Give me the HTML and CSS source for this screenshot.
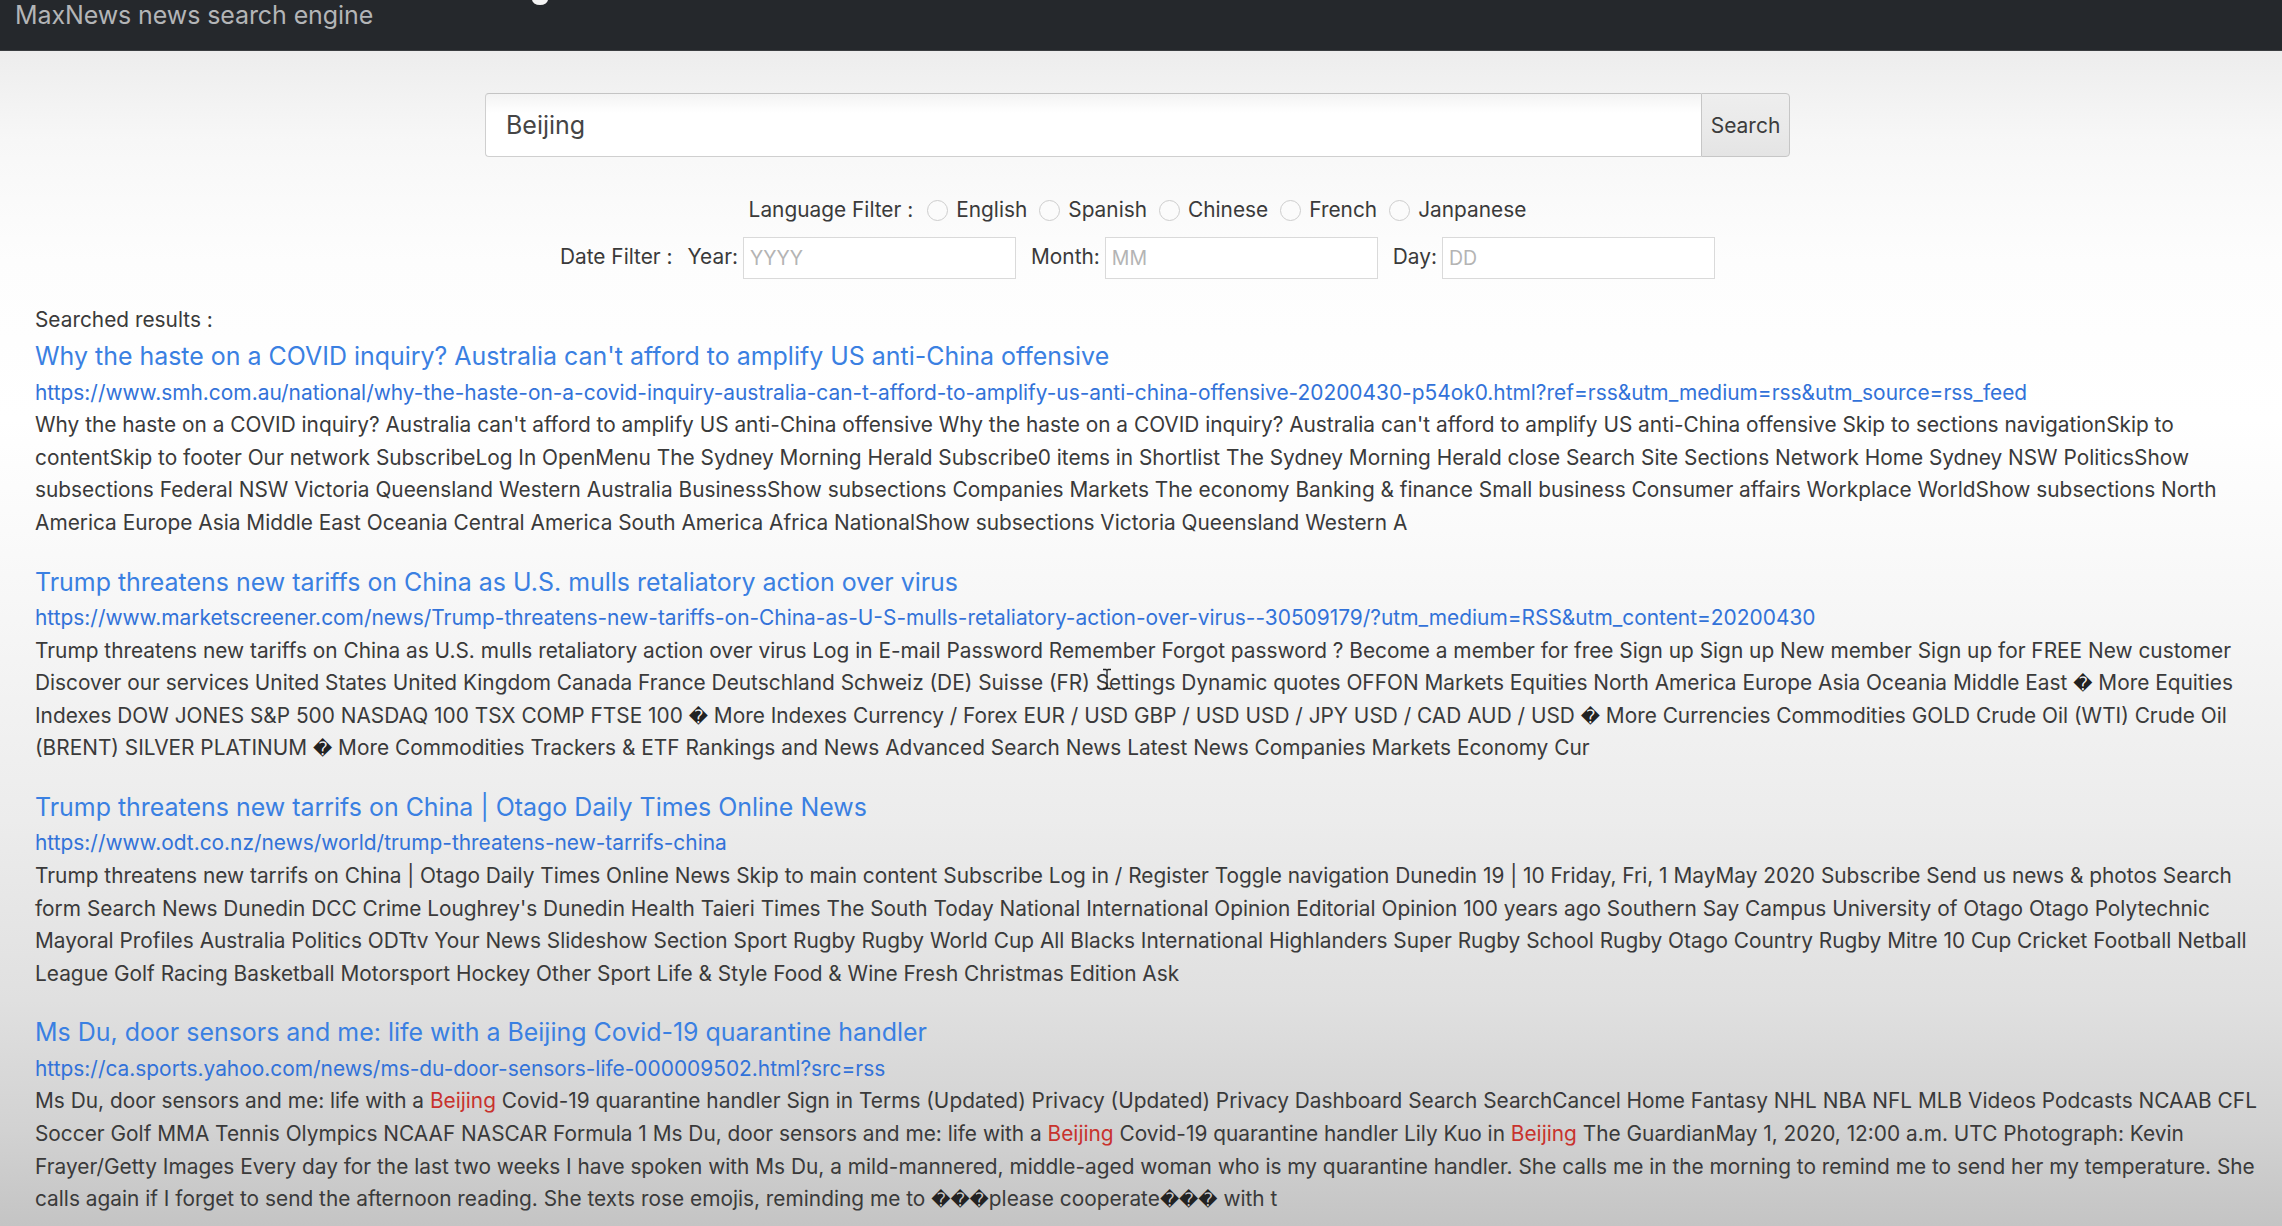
FILE: index.html
```html
<!DOCTYPE html>
<html lang="en">
<head>
<meta charset="utf-8">
<title>MaxNews news search engine</title>
<link rel="stylesheet" href="styles.css">
</head>
<body>
<nav class="navbar">
  <span class="brand">MaxNews news search engine</span>
  <span class="blip"></span>
</nav>
<main class="page">
  <section class="search-area">
    <form class="search-group">
      <input class="search-input" type="text" value="Beijing">
      <button class="search-btn" type="button">Search</button>
    </form>
    <div class="lang-row">
      <span class="filter-label">Language Filter :</span>
      <label class="opt"><input class="radio" type="radio" name="lang"><span>English</span></label>
      <label class="opt"><input class="radio" type="radio" name="lang"><span>Spanish</span></label>
      <label class="opt"><input class="radio" type="radio" name="lang"><span>Chinese</span></label>
      <label class="opt"><input class="radio" type="radio" name="lang"><span>French</span></label>
      <label class="opt"><input class="radio" type="radio" name="lang"><span>Janpanese</span></label>
    </div>
    <div class="date-row">
      <span class="date-title">Date Filter :</span>
      <label class="date-field"><span class="date-name">Year:</span><input class="date-input" type="text" placeholder="YYYY"></label>
      <label class="date-field"><span class="date-name">Month:</span><input class="date-input" type="text" placeholder="MM"></label>
      <label class="date-field"><span class="date-name">Day:</span><input class="date-input" type="text" placeholder="DD"></label>
    </div>
  </section>

  <section class="results">
    <div class="results-heading">Searched results :</div>

    <article class="result">
      <a class="result-title" href="#">Why the haste on a COVID inquiry? Australia can't afford to amplify US anti-China offensive</a>
      <a class="result-url" href="#">https://www.smh.com.au/national/why-the-haste-on-a-covid-inquiry-australia-can-t-afford-to-amplify-us-anti-china-offensive-20200430-p54ok0.html?ref=rss&amp;utm_medium=rss&amp;utm_source=rss_feed</a>
      <p class="result-snippet">Why the haste on a COVID inquiry? Australia can't afford to amplify US anti-China offensive Why the haste on a COVID inquiry? Australia can't afford to amplify US anti-China offensive Skip to sections navigationSkip to contentSkip to footer Our network SubscribeLog In OpenMenu The Sydney Morning Herald Subscribe0 items in Shortlist The Sydney Morning Herald close Search Site Sections Network Home Sydney NSW PoliticsShow subsections Federal NSW Victoria Queensland Western Australia BusinessShow subsections Companies Markets The economy Banking &amp; finance Small business Consumer affairs Workplace WorldShow subsections North America Europe Asia Middle East Oceania Central America South America Africa NationalShow subsections Victoria Queensland Western A</p>
    </article>

    <article class="result">
      <a class="result-title" href="#">Trump threatens new tariffs on China as U.S. mulls retaliatory action over virus</a>
      <a class="result-url" href="#">https://www.marketscreener.com/news/Trump-threatens-new-tariffs-on-China-as-U-S-mulls-retaliatory-action-over-virus--30509179/?utm_medium=RSS&amp;utm_content=20200430</a>
      <p class="result-snippet">Trump threatens new tariffs on China as U.S. mulls retaliatory action over virus Log in E-mail Password Remember Forgot password ? Become a member for free Sign up Sign up New member Sign up for FREE New customer Discover our services United States United Kingdom Canada France Deutschland Schweiz (DE) Suisse (FR) Settings Dynamic quotes OFFON Markets Equities North America Europe Asia Oceania Middle East <span class="bad">&#xFFFD;</span> More Equities Indexes DOW JONES S&amp;P 500 NASDAQ 100 TSX COMP FTSE 100 <span class="bad">&#xFFFD;</span> More Indexes Currency / Forex EUR / USD GBP / USD USD / JPY USD / CAD AUD / USD <span class="bad">&#xFFFD;</span> More Currencies Commodities GOLD Crude Oil (WTI) Crude Oil (BRENT) SILVER PLATINUM <span class="bad">&#xFFFD;</span> More Commodities Trackers &amp; ETF Rankings and News Advanced Search News Latest News Companies Markets Economy Cur</p>
    </article>

    <article class="result">
      <a class="result-title" href="#">Trump threatens new tarrifs on China | Otago Daily Times Online News</a>
      <a class="result-url" href="#">https://www.odt.co.nz/news/world/trump-threatens-new-tarrifs-china</a>
      <p class="result-snippet">Trump threatens new tarrifs on China | Otago Daily Times Online News Skip to main content Subscribe Log in / Register Toggle navigation Dunedin 19 | 10 Friday, Fri, 1 MayMay 2020 Subscribe Send us news &amp; photos Search form Search News Dunedin DCC Crime Loughrey's Dunedin Health Taieri Times The South Today National International Opinion Editorial Opinion 100 years ago Southern Say Campus University of Otago Otago Polytechnic Mayoral Profiles Australia Politics ODTtv Your News Slideshow Section Sport Rugby Rugby World Cup All Blacks International Highlanders Super Rugby School Rugby Otago Country Rugby Mitre 10 Cup Cricket Football Netball League Golf Racing Basketball Motorsport Hockey Other Sport Life &amp; Style Food &amp; Wine Fresh Christmas Edition Ask</p>
    </article>

    <article class="result">
      <a class="result-title" href="#">Ms Du, door sensors and me: life with a Beijing Covid-19 quarantine handler</a>
      <a class="result-url" href="#">https://ca.sports.yahoo.com/news/ms-du-door-sensors-life-000009502.html?src=rss</a>
      <p class="result-snippet">Ms Du, door sensors and me: life with a <mark class="hit">Beijing</mark> Covid-19 quarantine handler Sign in Terms (Updated) Privacy (Updated) Privacy Dashboard Search SearchCancel Home Fantasy NHL NBA NFL MLB Videos Podcasts NCAAB CFL Soccer Golf MMA Tennis Olympics NCAAF NASCAR Formula 1 Ms Du, door sensors and me: life with a <mark class="hit">Beijing</mark> Covid-19 quarantine handler Lily Kuo in <mark class="hit">Beijing</mark> The GuardianMay 1, 2020, 12:00 a.m. UTC Photograph: Kevin Frayer/Getty Images Every day for the last two weeks I have spoken with Ms Du, a mild-mannered, middle-aged woman who is my quarantine handler. She calls me in the morning to remind me to send her my temperature. She calls again if I forget to send the afternoon reading. She texts rose emojis, reminding me to <span class="bad">&#xFFFD;&#xFFFD;&#xFFFD;</span>please cooperate<span class="bad">&#xFFFD;&#xFFFD;&#xFFFD;</span> with t</p>
    </article>
  </section>
</main>
<svg class="ibeam" width="12" height="22" viewBox="0 0 12 22" aria-hidden="true">
  <path d="M2 1.5h3l1 1 1-1h3M6 2.5v17M2 20.5h3l1-1 1 1h3" fill="none" stroke="#222" stroke-width="1.3"/>
</svg>
</body>
</html>
```

FILE: styles.css
```css
html, body {
  margin: 0;
  padding: 0;
}

body {
  position: relative;
  min-height: 1226px;
  font-family: Inter, "Liberation Sans", Arial, sans-serif;
  font-size: 20.85px;
  line-height: 32.6px;
  color: #3a3a3a;
  background:
    linear-gradient(180deg,
      #e6e6e6 0px,
      #eeeeee 60px,
      #f7f7f7 140px,
      #fdfdfd 260px,
      #ffffff 420px,
      #f6f6f6 620px,
      #ececec 820px,
      #e0e0e0 1000px,
      #d2d2d2 1130px,
      #c4c4c4 1226px);
  overflow: hidden;
}

/* ---------- navbar ---------- */
.navbar {
  position: relative;
  height: 51px;
  background: #25282c;
  border-bottom: 1px solid #3a3d40;
  box-sizing: border-box;
  padding-left: 15px;
}

.brand {
  display: block;
  font-size: 25px;
  line-height: 30px;
  color: #b3b5b7;
  letter-spacing: -0.1px;
}

.blip {
  position: absolute;
  left: 532px;
  top: -6px;
  width: 16px;
  height: 11px;
  border-radius: 50%;
  background: #f4f4f4;
}

/* ---------- search area ---------- */
.search-area {
  padding-right: 7px;
  display: flex;
  flex-direction: column;
  align-items: center;
}

.search-group {
  margin: 42px 0 0;
  display: flex;
  width: 1305px;
  height: 64px;
}

.search-input {
  flex: 1;
  box-sizing: border-box;
  height: 64px;
  margin: 0;
  padding: 0 20px;
  border: 1px solid #cfcfcf;
  border-top-color: #c4c4c4;
  border-right: none;
  border-radius: 4px 0 0 4px;
  background: linear-gradient(180deg, #f3f3f3 0%, #ffffff 30%, #ffffff 100%);
  font-family: inherit;
  font-size: 25px;
  color: #454545;
  outline: none;
}

.search-btn {
  width: 89px;
  height: 64px;
  box-sizing: border-box;
  margin: 0;
  padding: 0;
  border: 1px solid #c6c6c6;
  border-radius: 0 4px 4px 0;
  background: linear-gradient(180deg, #eeeeee 0%, #e9e9e9 60%, #e4e4e4 100%);
  font-family: inherit;
  font-size: 21px;
  color: #3c3c3c;
}

.lang-row {
  margin-top: 37px;
  display: flex;
  align-items: center;
  height: 32.6px;
}

.filter-label {
  margin-right: 14px;
}

.opt {
  display: flex;
  align-items: center;
  margin-right: 12px;
}

.opt:last-child {
  margin-right: 0;
}

.radio {
  appearance: none;
  -webkit-appearance: none;
  width: 21px;
  height: 21px;
  margin: 0 8px 0 0;
  border: 1px solid #cdcdcd;
  border-radius: 50%;
  background: #fbfbfb;
  box-sizing: border-box;
}

.date-row {
  margin-top: 10px;
  display: flex;
  align-items: center;
  height: 42px;
}

.date-title {
  margin-right: 15px;
}

.date-field {
  display: flex;
  align-items: center;
  margin-right: 15px;
}

.date-field:last-child {
  margin-right: 0;
}

.date-name {
  margin-right: 5px;
}

.date-input {
  width: 273px;
  height: 42px;
  box-sizing: border-box;
  margin: 0;
  padding: 0 6px;
  border: 1px solid #dadada;
  border-radius: 0;
  background: #ffffff;
  font-family: inherit;
  font-size: 19.5px;
  color: #444;
  outline: none;
}

.date-input::placeholder {
  color: #b4b4b4;
}

/* ---------- results ---------- */
.results {
  margin-top: 25px;
  padding: 0 17px 0 35px;
}

.results-heading {
  color: #3a3a3a;
}

.result {
  margin-bottom: 22px;
}

.result-title {
  display: block;
  font-size: 24.95px;
  line-height: 40.4px;
  color: #3a80e2;
  text-decoration: none;
}

.result-url {
  display: block;
  font-size: 20.9px;
  color: #3272d9;
  text-decoration: none;
}

.result-snippet {
  margin: 0;
}

.hit {
  background: none;
  color: #c8322d;
}

.bad {
  font-family: "DejaVu Sans", sans-serif;
  font-size: 0.9em;
  line-height: 1;
  color: #222;
}

.ibeam {
  position: absolute;
  left: 1101px;
  top: 668px;
}
```
